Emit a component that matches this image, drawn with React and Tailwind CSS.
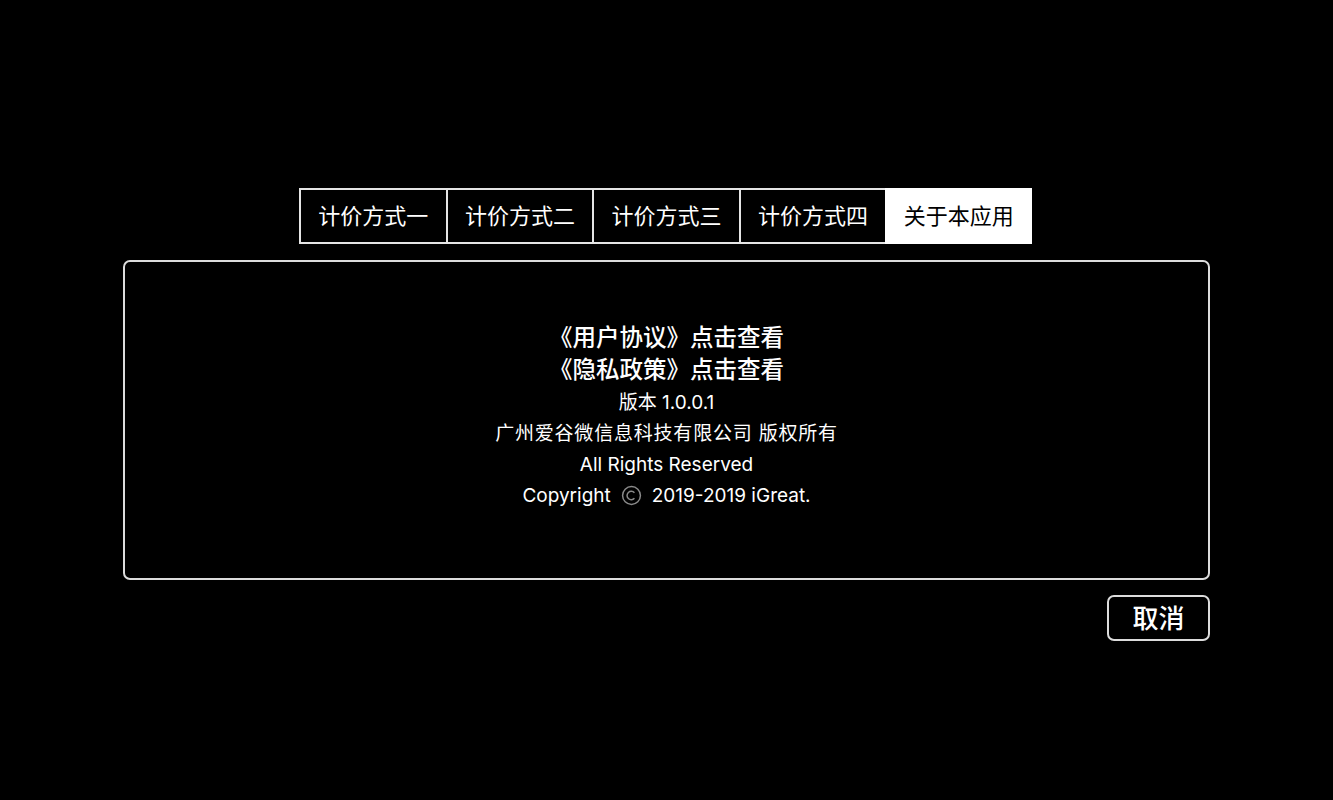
const tabs = ["计价方式一", "计价方式二", "计价方式三", "计价方式四", "关于本应用"];

const font = { fontFamily: 'Inter, "Noto Sans CJK SC", "Noto Sans", sans-serif' };

const App = () => {
  const active = 4;

  return (
    <div
      className="w-full h-[800px] bg-black text-white flex flex-col items-center pt-[188px]"
      style={font}
    >
      <div className="flex ml-[-2px]">
        {tabs.map((t, i) => (
          <div
            key={t}
            className={
              i === active
                ? "w-[146.6px] h-[56px] flex items-center justify-center text-[22px] bg-white text-black border-2 border-white"
                : "w-[146.6px] h-[56px] flex items-center justify-center text-[22px] border-y-2 border-l-2 border-[#e5e5e5]"
            }
          >
            {t}
          </div>
        ))}
      </div>

      <div className="mt-[16px] w-[1087px] h-[320px] border-2 border-[#dcdcdc] rounded-[7px] flex flex-col items-center pt-[60px]">
        <div className="text-[23.5px] leading-[32px] font-medium">《用户协议》点击查看</div>
        <div className="text-[23.5px] leading-[32px] font-medium">《隐私政策》点击查看</div>
        <div className="text-[19px] leading-[31px] mt-[1px]">版本 1.0.0.1</div>
        <div className="text-[19px] leading-[31px] tracking-[0.8px]">广州爱谷微信息科技有限公司 版权所有</div>
        <div className="text-[19px] leading-[31px]">All Rights Reserved</div>
        <div className="text-[19px] leading-[31px] flex items-center">
          <span>Copyright</span>
          <svg width="21" height="21" viewBox="0 0 20 20" className="mx-[10px]">
            <circle cx="10" cy="10" r="8.5" fill="none" stroke="#8a8a8a" strokeWidth="1.4" />
            <path d="M12.8 7.4A4 4 0 1 0 12.8 12.6" fill="none" stroke="#8a8a8a" strokeWidth="1.4" />
          </svg>
          <span>2019-2019 iGreat.</span>
        </div>
      </div>

      <div className="w-[1087px] flex justify-end mt-[15px]">
        <button className="w-[103px] h-[46px] border-2 border-[#dcdcdc] rounded-[7px] text-[26px] font-medium text-white flex items-center justify-center">
          取消
        </button>
      </div>
    </div>
  );
};

export default App;
